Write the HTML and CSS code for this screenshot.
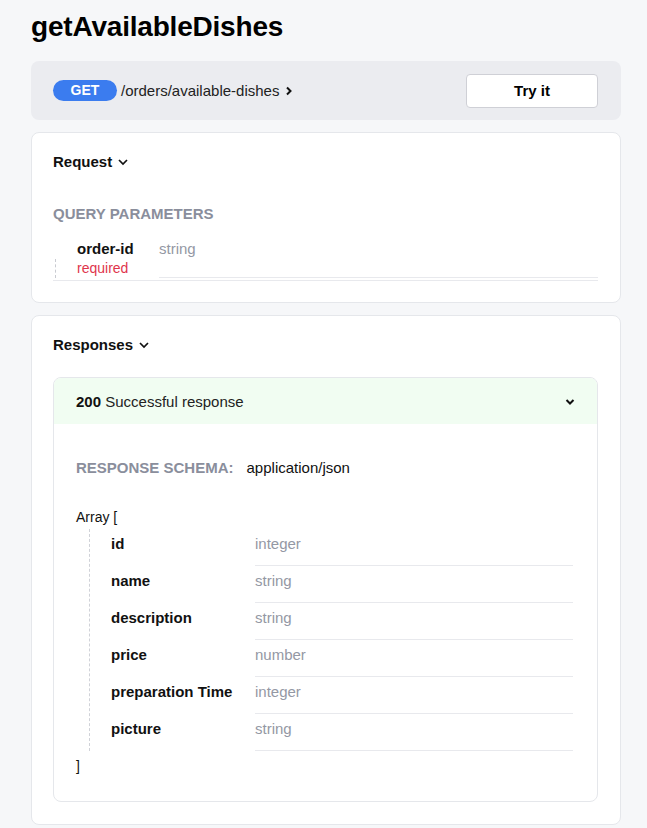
FILE: index.html
```html
<!DOCTYPE html>
<html>
<head>
<meta charset="utf-8">
<link rel="stylesheet" href="styles.css">
</head>
<body>
<main class="page">
  <h1 class="title">getAvailableDishes</h1>

  <div class="endpoint">
    <div class="endpoint-left">
      <span class="method">GET</span>
      <span class="path">/orders/available-dishes</span>
      <svg class="chev-right" width="8" height="10" viewBox="0 0 8 10"><path d="M2 1.5 L5.5 5 L2 8.5" fill="none" stroke="#111" stroke-width="2"/></svg>
    </div>
    <button class="try">Try it</button>
  </div>

  <section class="card req">
    <div class="card-head">Request
      <svg class="chev-down" width="12" height="8" viewBox="0 0 12 8"><path d="M2 2 L6 6 L10 2" fill="none" stroke="#111" stroke-width="1.7"/></svg>
    </div>
    <div class="label qp">QUERY PARAMETERS</div>
    <div class="param">
      <div class="param-name">
        <div class="pname">order-id</div>
        <div class="preq">required</div>
      </div>
      <div class="param-type">string</div>
    </div>
  </section>

  <section class="card resp">
    <div class="card-head">Responses
      <svg class="chev-down" width="12" height="8" viewBox="0 0 12 8"><path d="M2 2 L6 6 L10 2" fill="none" stroke="#111" stroke-width="1.7"/></svg>
    </div>
    <div class="inner">
      <div class="inner-head">
        <span><b>200</b> Successful response</span>
        <svg width="10" height="8" viewBox="0 0 10 8"><path d="M1.5 2 L5 5.5 L8.5 2" fill="none" stroke="#111" stroke-width="2"/></svg>
      </div>
      <div class="inner-body">
        <div class="schema"><span class="label">RESPONSE SCHEMA:</span><span class="mime">application/json</span></div>
        <div class="arr">Array [</div>
        <div class="props">
          <div class="prop"><span class="prop-name">id</span><span class="prop-type">integer</span></div>
          <div class="prop"><span class="prop-name">name</span><span class="prop-type">string</span></div>
          <div class="prop"><span class="prop-name">description</span><span class="prop-type">string</span></div>
          <div class="prop"><span class="prop-name">price</span><span class="prop-type">number</span></div>
          <div class="prop"><span class="prop-name">preparation Time</span><span class="prop-type">integer</span></div>
          <div class="prop"><span class="prop-name">picture</span><span class="prop-type">string</span></div>
        </div>
        <div class="arr-end">]</div>
      </div>
    </div>
  </section>
</main>
</body>
</html>
```

FILE: styles.css
```css
* { box-sizing: border-box; }
html, body { margin: 0; padding: 0; }
body {
  background: #f6f7f9;
  font-family: "Liberation Sans", Arial, sans-serif;
  color: #111;
}
.page { padding: 10px 26px 0 31px; }
.title {
  margin: 0;
  font-size: 28px;
  line-height: 34px;
  font-weight: bold;
  letter-spacing: -0.2px;
  color: #000;
}
.endpoint {
  margin-top: 17px;
  height: 59px;
  background: #ebecf0;
  border-radius: 8px;
  display: flex;
  align-items: center;
  justify-content: space-between;
  padding: 0 23px 0 22px;
}
.endpoint-left { display: flex; align-items: center; }
.method {
  width: 64px;
  height: 21px;
  border-radius: 11px;
  background: #3b7cef;
  color: #fff;
  font-weight: bold;
  font-size: 14px;
  line-height: 21px;
  text-align: center;
}
.path { margin-left: 4px; font-size: 15px; color: #222; }
.chev-right { margin-left: 6px; }
.try {
  width: 132px;
  height: 34px;
  background: #fff;
  border: 1px solid #cfd0d6;
  border-radius: 4px;
  font-family: inherit;
  font-weight: bold;
  font-size: 15px;
  color: #000;
  padding: 0;
}
.card {
  background: #fff;
  border: 1px solid #e5e7eb;
  border-radius: 8px;
}
.req { margin-top: 12px; padding: 20px 22px 21px 21px; }
.resp { margin-top: 12px; padding: 20px 22px 22px 21px; }
.card-head {
  font-weight: bold;
  font-size: 15px;
  line-height: 18px;
  display: flex;
  align-items: center;
}
.chev-down { margin-left: 5px; }
.label {
  font-weight: bold;
  font-size: 15px;
  line-height: 18px;
  color: #8a8e9c;
}
.qp { margin-top: 34px; }
.param {
  margin-top: 17px;
  display: flex;
  border-bottom: 1px solid #e8e9ed;
  padding-bottom: 2px;
}
.param-name {
  width: 106px;
  padding-left: 24px;
  position: relative;
}
.param-name::before {
  content: "";
  position: absolute;
  left: 2px;
  top: 19px;
  height: 19px;
  border-left: 1px dashed #c9cbd1;
}
.pname { font-weight: bold; font-size: 15px; line-height: 18px; }
.preq { font-size: 14px; line-height: 20px; color: #e0354c; }
.param-type {
  flex: 1;
  font-size: 15px;
  line-height: 18px;
  color: #9498a4;
  border-bottom: 1px solid #e8e9ed;
}
.inner {
  margin-top: 23px;
  border: 1px solid #e5e7eb;
  border-radius: 8px;
  overflow: hidden;
}
.inner-head {
  height: 46px;
  padding: 1px 22px 0;
  background: #f1fdf2;
  display: flex;
  align-items: center;
  justify-content: space-between;
  font-size: 15px;
  color: #222;
}
.inner-head b { color: #111; }
.inner-body { padding: 35px 24px 26px 22px; }
.schema { display: flex; align-items: center; line-height: 18px; }
.mime { margin-left: 13px; font-size: 15px; color: #111; }
.arr { margin-top: 31px; font-size: 14px; line-height: 18px; margin-bottom: 3px; }
.props {
  margin-left: 13px;
  border-left: 1px dashed #d0d2d8;
  padding-left: 21px;
}
.prop {
  display: flex;
  height: 37px;
}
.prop-name {
  width: 144px;
  padding-top: 6px;
  font-weight: bold;
  font-size: 15px;
  line-height: 18px;
}
.prop-type {
  flex: 1;
  padding-top: 6px;
  font-size: 15px;
  line-height: 18px;
  color: #9498a4;
  border-bottom: 1px solid #e8e9ed;
}
.arr-end { margin-top: 6px; font-size: 14px; line-height: 18px; }
```
